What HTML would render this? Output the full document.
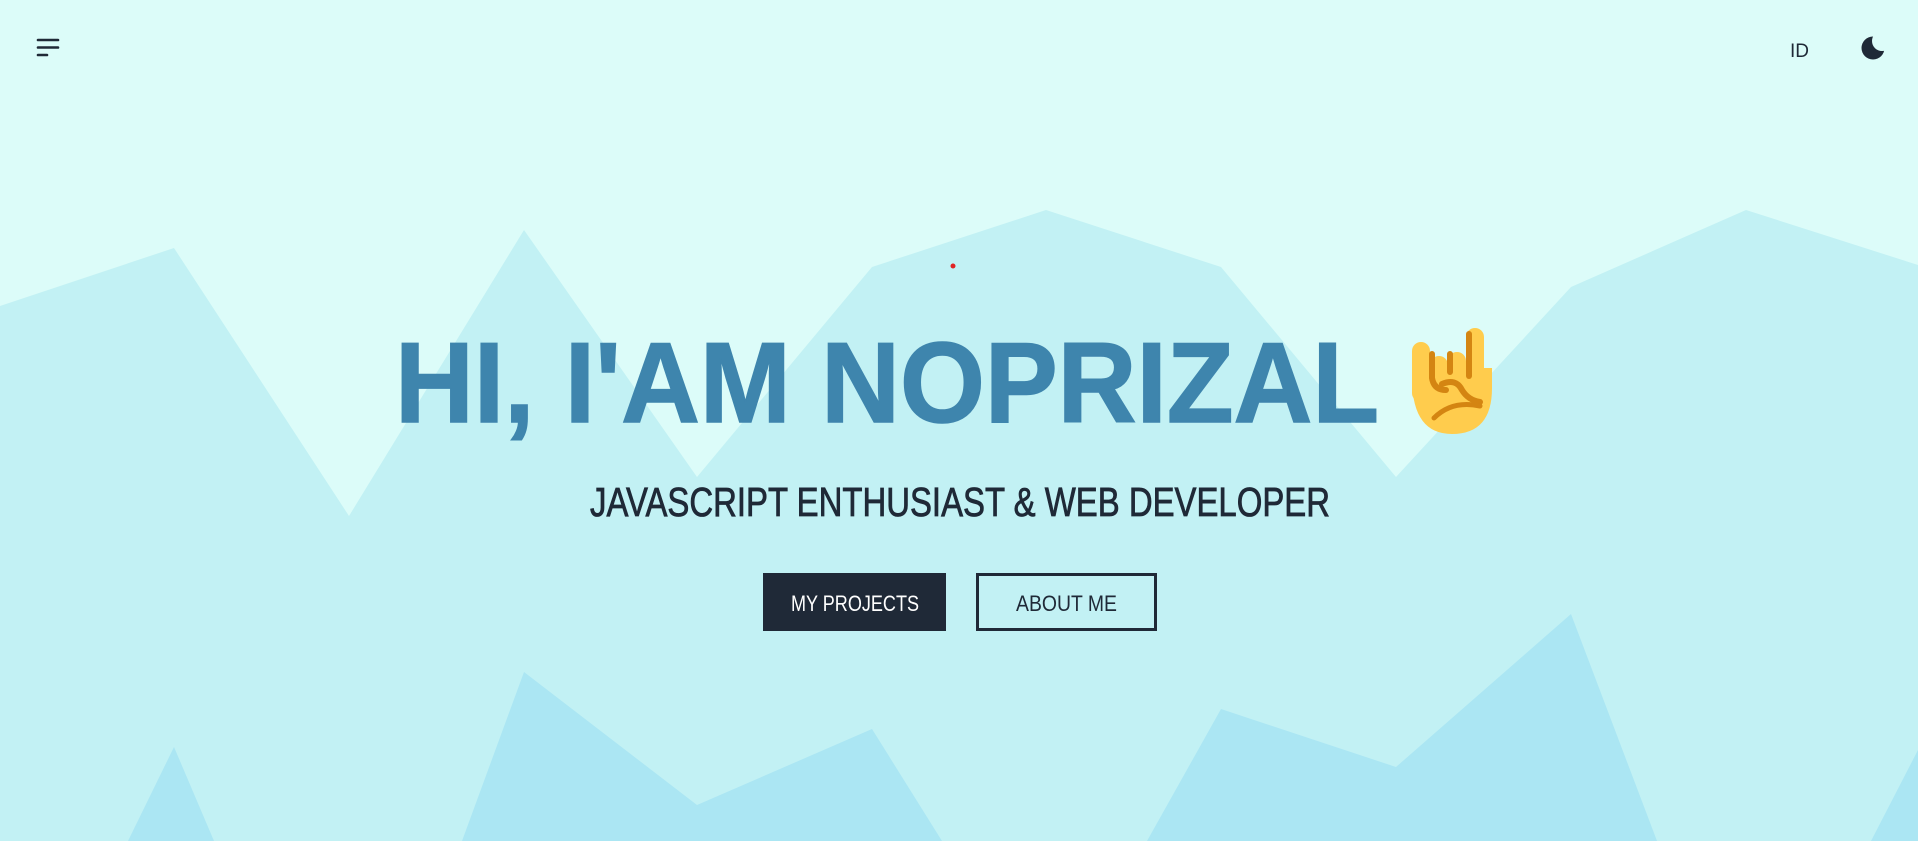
<!DOCTYPE html>
<html><head><meta charset="utf-8"><style>
html,body{margin:0;padding:0;width:1918px;height:841px;overflow:hidden;background:#dcfcf9;font-family:"Liberation Sans",sans-serif}
svg{position:absolute;left:0;top:0}
</style></head><body>
<svg width="1918" height="841" viewBox="0 0 1918 841">
<rect width="1918" height="841" fill="#dcfcf9"/>
<polygon fill="#c2f1f4" points="0,306 174,248 349,516 524,230 697,477 872,267 1046,210 1221,267 1396,477 1571,287 1746,210 1918,265 1918,841 0,841"/>
<polygon fill="#abe6f3" points="128,841 174,747 214,841"/>
<polygon fill="#abe6f3" points="462,841 524,672 697,805 872,729 942,841"/>
<polygon fill="#abe6f3" points="1147,841 1221,709 1396,767 1571,614 1657,841"/>
<polygon fill="#abe6f3" points="1871,841 1918,750 1918,841"/>
<circle cx="953" cy="266" r="2.5" fill="#e02424"/>
<g stroke="#1f2937" stroke-width="2.6" stroke-linecap="round">
<line x1="38" y1="40" x2="58" y2="40"/><line x1="38" y1="47.5" x2="58" y2="47.5"/><line x1="38" y1="55" x2="47" y2="55"/>
</g>
<text x="1790" y="57" font-size="19" fill="#1f2937" font-family="Liberation Sans">ID</text>
<circle cx="1873" cy="48" r="11.5" fill="#1f2937"/>
<circle cx="1882" cy="41" r="10" fill="#dcfcf9"/>
<text x="395" y="422" font-size="114" font-weight="bold" fill="#3e85ad" stroke="#3e85ad" stroke-width="1.5" textLength="984" lengthAdjust="spacingAndGlyphs" font-family="Liberation Sans">HI, I'AM NOPRIZAL</text>
<g transform="translate(1412,328)">
<rect x="54" y="0" width="18" height="70" rx="9" fill="#ffcc4d"/>
<rect x="0" y="14" width="18" height="60" rx="9" fill="#ffcc4d"/>
<path d="M0,50 Q0,106 40,106 Q80,106 80,60 L80,40 L0,40 Z" fill="#ffcc4d"/>
<rect x="18" y="28" width="18" height="40" rx="9" fill="#ffcc4d"/>
<rect x="36" y="24" width="18" height="40" rx="9" fill="#ffcc4d"/>
<path d="M57,6 L57,48" stroke="#d48512" stroke-width="6" stroke-linecap="round" fill="none"/>
<path d="M20,26 L20,50 Q22,62 34,62" stroke="#d48512" stroke-width="6" stroke-linecap="round" fill="none"/>
<path d="M38,26 L38,44 M30,56 Q44,50 50,62 Q56,72 68,74" stroke="#d48512" stroke-width="6" stroke-linecap="round" fill="none"/>
<path d="M22,90 Q40,72 68,78" stroke="#d48512" stroke-width="5" stroke-linecap="round" fill="none"/>
</g>
<text x="590" y="516" font-size="41" fill="#1f2937" stroke="#1f2937" stroke-width="0.8" textLength="740" lengthAdjust="spacingAndGlyphs" font-family="Liberation Sans">JAVASCRIPT ENTHUSIAST &amp; WEB DEVELOPER</text>
<rect x="763" y="573" width="183" height="58" fill="#1f2937"/>
<text x="791" y="611" font-size="22" fill="#ffffff" textLength="128" lengthAdjust="spacingAndGlyphs" font-family="Liberation Sans">MY PROJECTS</text>
<rect x="977.5" y="574.5" width="178" height="55" fill="none" stroke="#1f2937" stroke-width="3"/>
<text x="1016" y="611" font-size="22" fill="#1f2937" textLength="101" lengthAdjust="spacingAndGlyphs" font-family="Liberation Sans">ABOUT ME</text>
</svg>
</body></html>
